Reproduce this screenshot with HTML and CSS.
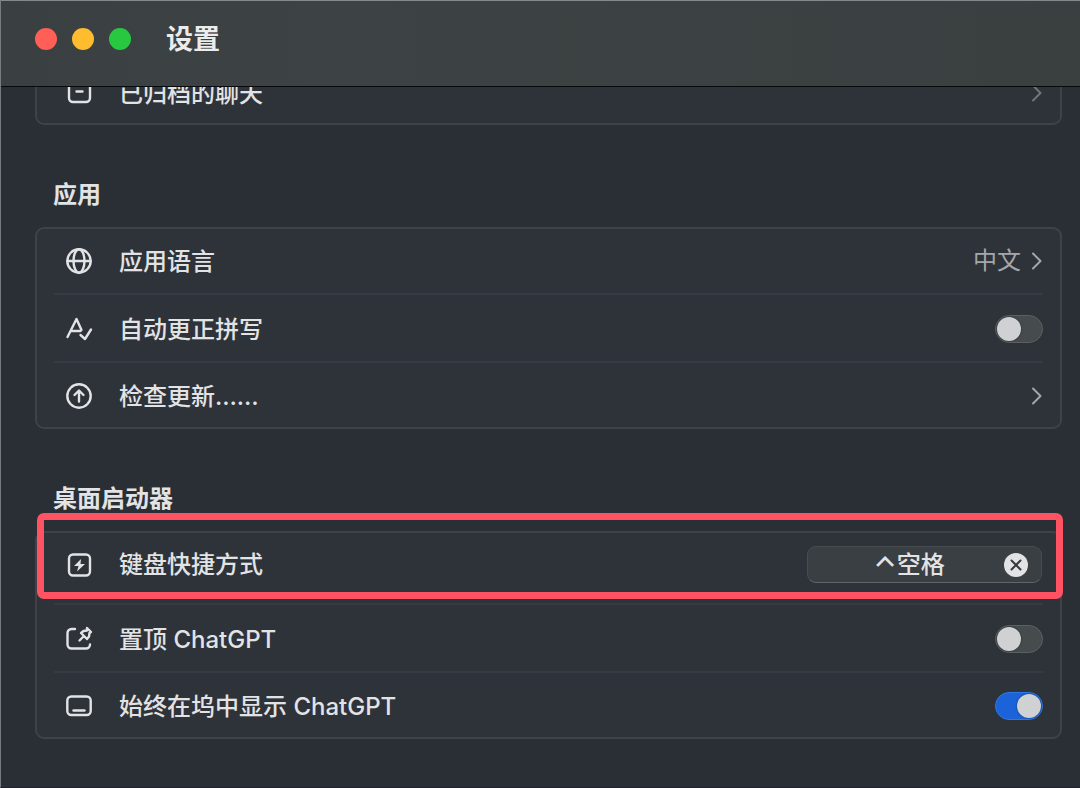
FILE: index.html
```
<!DOCTYPE html>
<html lang="zh-CN">
<head>
    <meta charset="UTF-8">
    <meta name="viewport" content="width=device-width, initial-scale=1.0">
    <title>设置</title>
    <link rel="stylesheet" href="styles.css">
</head>
<body>

    <!-- Title Bar -->
    <header class="titlebar">
        <div class="lights">
            <button class="light close" type="button" aria-label="关闭"></button>
            <button class="light minimize" type="button" aria-label="最小化"></button>
            <button class="light zoom" type="button" aria-label="缩放"></button>
        </div>
        <h1>设置</h1>
    </header>

    <!-- Settings List -->
    <main class="content">
        <section class="card scrolled">
            <button class="row last" type="button">
                <svg class="icon" viewBox="0 0 28 28"><path d="M4 1h21v5H4zM4 6v13a4 4 0 0 0 4 4h13a4 4 0 0 0 4-4V6M11.500 12.500h6"/></svg>
                <span class="name">已归档的聊天</span>
                <svg class="chevron dim" viewBox="0 0 12 20"><path d="M2 2.500l7.500 7.500-7.500 7.500"/></svg>
            </button>
        </section>

        <h2>应用</h2>
        <section class="card">
            <button class="row first" type="button">
                <svg class="icon" viewBox="0 0 28 28"><circle cx="14" cy="14" r="11.700"/><ellipse cx="14" cy="14" rx="5.500" ry="11.700"/><path d="M2.500 14h23"/></svg>
                <span class="name">应用语言</span>
                <span class="value">中文</span>
                <svg class="chevron" viewBox="0 0 12 20"><path d="M2 2.500l7.500 7.500-7.500 7.500"/></svg>
            </button>
            <div class="row">
                <svg class="icon" viewBox="0 0 28 28"><path d="M2.500 22L11.500 4l5 11M6 16h9.500M15.500 20l4.500 4 6-9.500"/></svg>
                <label class="name" for="spelling">自动更正拼写</label>
                <input class="toggle" type="checkbox" id="spelling">
            </div>
            <button class="row last" type="button">
                <svg class="icon" viewBox="0 0 28 28"><circle cx="14" cy="14" r="11.700"/><path d="M14 19.500V9M9.500 13L14 8.500l4.500 4.500"/></svg>
                <span class="name">检查更新……</span>
                <svg class="chevron" viewBox="0 0 12 20"><path d="M2 2.500l7.500 7.500-7.500 7.500"/></svg>
            </button>
        </section>

        <h2>桌面启动器</h2>
        <section class="card">
            <div class="row tall">
                <svg class="icon" viewBox="0 0 28 28"><rect x="4" y="3.500" width="21" height="21" rx="4"/><path class="solid" d="M16 8l-7 7h4.500l-1.500 5.500 8-7.500h-4.500z"/></svg>
                <span class="name">键盘快捷方式</span>
                <div class="shortcut">
                    <button class="keys" type="button"><span class="modifier">⌃</span>空格</button>
                    <button class="clear" type="button" aria-label="清除">
                        <svg viewBox="0 0 24 24"><circle cx="12" cy="12" r="12"/><path d="M7.500 7.500l9 9M16.500 7.500l-9 9"/></svg>
                    </button>
                </div>
            </div>
            <div class="row">
                <svg class="icon" viewBox="0 0 28 28"><path d="M10 4H6.500a4 4 0 0 0-4 4V19.500a4 4 0 0 0 4 4h14.500a4 4 0 0 0 4-4"/><path d="M14.500 15.500l4.500-4.500M22 3l4 4-1.500 1-.5 3.500-2 2.500-6-6 2.500-2 3.500-.5z"/></svg>
                <label class="name" for="pin">置顶 ChatGPT</label>
                <input class="toggle" type="checkbox" id="pin">
            </div>
            <div class="row last">
                <svg class="icon" viewBox="0 0 28 28"><rect x="2.300" y="4.500" width="23.400" height="18.500" rx="4"/><path d="M8.500 18.500h11"/></svg>
                <label class="name" for="dock">始终在坞中显示 ChatGPT</label>
                <input class="toggle" type="checkbox" id="dock" checked>
            </div>
            <div class="highlight"></div>
        </section>
    </main>

</body>
</html>
```
FILE: styles.css
```
* {
    box-sizing: border-box;
}

/* Window */
body {
    margin: 0;
    height: 100vh;
    display: flex;
    flex-direction: column;
    overflow: hidden;
    background: #2a2e35;
    border-left: 1px solid #767b7e;
    border-bottom: 1px solid #231f2b;
    color: #e2e3e4;
    font-family: Inter, "Noto Sans CJK SC", sans-serif;
    font-size: 24px;
    font-weight: 500;
    line-height: 36px;
}

button {
    margin: 0;
    padding: 0;
    border: 0;
    background: none;
    color: inherit;
    font: inherit;
}

/* Title Bar */
.titlebar {
    flex: none;
    display: flex;
    align-items: center;
    gap: 35px;
    height: 87px;
    padding: 0 34px 9px;
    background: linear-gradient(to right, #3a3f41, #3d4244 30%, #3a3f40);
    border-top: 1px solid #85898b;
    border-bottom: 1px solid #08090a;
}

.lights {
    display: flex;
    gap: 15px;
}

.light {
    width: 22px;
    height: 22px;
    border-radius: 50%;
}

.close {
    background: #ff5f57;
}

.minimize {
    background: #febc2e;
}

.zoom {
    background: #28c840;
}

h1 {
    margin: 0;
    padding-top: 2px;
    font-size: 27px;
    font-weight: 700;
    color: #ececec;
}

/* Settings List */
.content {
    flex: 1;
    min-height: 0;
    overflow: hidden;
    padding: 0 18px 0 34px;
}

h2 {
    margin: 52px 17px 14px 18px;
    font-size: 24px;
    font-weight: 700;
}

.card {
    position: relative;
    padding: 0 17px;
    background: #2e3239;
    border: 2px solid #3f4347;
    border-radius: 9px;
}

.row {
    display: flex;
    align-items: center;
    width: 100%;
    height: 68px;
    padding: 2px 0 0 11px;
    border-bottom: 2px solid #363a42;
    text-align: left;
}

.row.first {
    height: 66px;
    padding-top: 0;
}

.row.last {
    height: 64px;
    border-bottom: 0;
}

.row.tall {
    height: 72px;
    padding: 0 0 7px 11px;
}

/* First card is partly scrolled under the title bar */
.card.scrolled {
    margin-top: -26px;
}

.scrolled .row.last {
    height: 60px;
    padding-top: 0;
}

.name {
    flex: 1;
    margin-left: 26px;
    padding-top: 1px;
}

.value {
    margin-right: 10px;
    color: #a4a7aa;
    font-weight: 400;
}

/* Icons */
.icon {
    flex: none;
    width: 28px;
    height: 28px;
    fill: none;
    stroke: #e2e3e4;
    stroke-width: 2.4;
    stroke-linecap: round;
    stroke-linejoin: round;
}

.icon .solid {
    fill: #e2e3e4;
    stroke: none;
}

.chevron {
    width: 12px;
    height: 20px;
    fill: none;
    stroke: #a4a7aa;
    stroke-width: 2;
    stroke-linecap: round;
    stroke-linejoin: round;
}

.chevron.dim {
    stroke: #72767a;
}

/* Toggle Switch */
.toggle {
    appearance: none;
    display: flex;
    width: 48px;
    height: 28px;
    margin: 0;
    padding: 1px;
    background: #464b4e;
    border: 1px solid #5b6063;
    border-radius: 14px;
}

.toggle::before {
    content: "";
    width: 24px;
    height: 24px;
    border-radius: 50%;
    background: #d0d1d3;
    box-shadow: 0 0 2px rgba(0, 0, 0, 0.5);
}

.toggle:checked {
    justify-content: flex-end;
    background: #1c62d8;
    border-color: #2f78e6;
}

/* Shortcut Field */
.shortcut {
    display: flex;
    align-items: center;
    width: 235px;
    height: 37px;
    margin-right: 1px;
    padding-right: 13px;
    background: #3a3f44;
    border: 1px solid #474c50;
    border-bottom-color: #62666a;
    border-radius: 9px;
}

.keys {
    flex: 1;
    padding-left: 6px;
}

.modifier {
    font-size: 30px;
    line-height: 24px;
    vertical-align: -5px;
}

.clear {
    width: 24px;
    height: 24px;
}

.clear svg {
    display: block;
    fill: #e2e3e4;
    stroke: #34393e;
    stroke-width: 2;
    stroke-linecap: round;
}

.clear circle {
    stroke: none;
}

/* Highlight Frame */
.highlight {
    position: absolute;
    top: -20px;
    left: 0;
    right: -3px;
    height: 86px;
    border: 7px solid #ff5263;
    border-radius: 7px;
    pointer-events: none;
}
```
